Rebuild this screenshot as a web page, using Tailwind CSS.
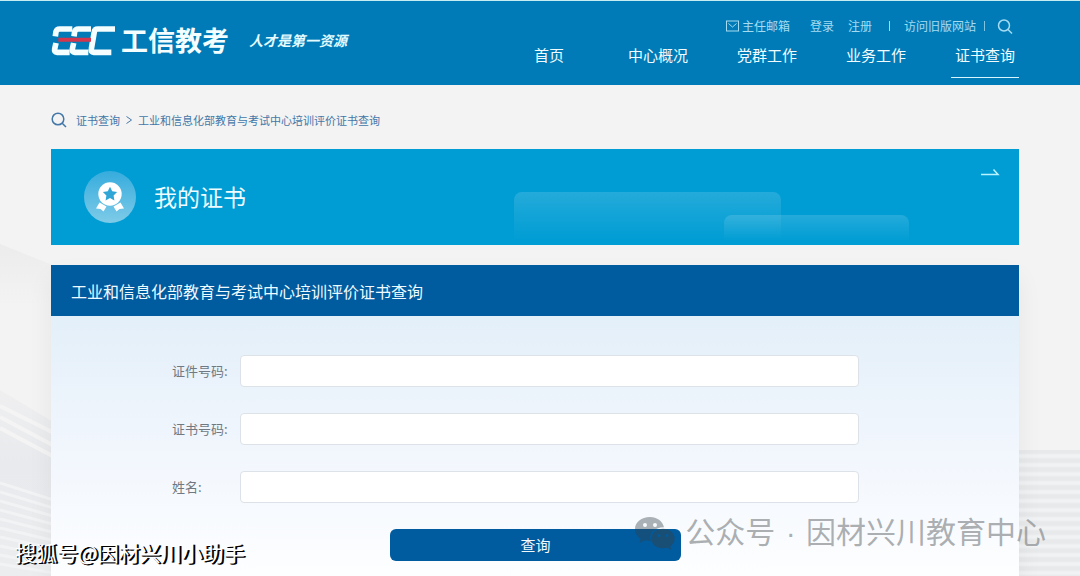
<!DOCTYPE html>
<html lang="zh-CN">
<head>
<meta charset="utf-8">
<meta name="viewport" content="width=device-width, initial-scale=1">
<title>证书查询</title>
<script src="https://cdn.jsdelivr.net/npm/@tailwindcss/browser@4"></script>
</head>
<body class="relative flex min-h-screen flex-col overflow-x-hidden bg-[#f3f3f3] font-['Noto_Sans_CJK_SC',sans-serif]">

<!-- Page backdrop -->
<svg class="absolute left-0 top-[240px] h-[336px] w-[60px]" viewBox="0 0 60 336" fill="none" aria-hidden="true">
  <defs>
    <linearGradient id="haze" x1="0" y1="0" x2="0" y2="1"><stop offset="0" stop-color="#ececed"/><stop offset=".35" stop-color="#f3f3f3"/></linearGradient>
    <linearGradient id="slope" x1="0" y1="0" x2="0" y2="1"><stop offset="0" stop-color="#efeff0"/><stop offset=".4" stop-color="#e8eaed"/><stop offset="1" stop-color="#ebedef"/></linearGradient>
  </defs>
  <path d="M0 4 60 28V180H0Z" fill="url(#haze)"/>
  <path d="M0 150 60 186V336H0Z" fill="url(#slope)"/>
  <path d="M0 166 60 196M0 177 60 209M0 188 60 220" stroke="#f4f4f5" stroke-width="4"/>
  <path d="M0 243 60 262M0 252 60 270M0 261 60 278M0 270 60 286M0 279 60 294M0 288 60 302M0 297 60 310M0 306 60 318M0 315 60 326M0 324 60 334" stroke="#f2f3f4" stroke-width="3"/>
</svg>
<div class="absolute right-0 top-[450px] h-[126px] w-[70px] bg-[repeating-linear-gradient(to_bottom,#e8e9ea_0px,#e8e9ea_3px,#f1f2f3_5px,#f1f2f3_7px,#e8e9ea_9px)]"></div>

<header class="relative flex h-[85px] justify-between border-t border-[#c4eef2] bg-[#007bb7] pl-[51px] pr-[61px] text-white">
  <a href="#" class="mt-[19px] flex h-10 items-center">
    <svg class="h-[34px] w-[66px]" viewBox="14 8 198 102" fill="none" stroke="#f4feff" stroke-width="17" aria-label="EEC" role="img">
      <path d="M78 26H40q-9 0-11 8l-2 14M29 68l-4 18q-2 10 7 10H70"/>
      <path d="M134 26H96q-9 0-11 8l-2 14M82 68l-4 18q-2 10 7 10H126"/>
      <path d="M206 26H154q-9 0-10 8l-9 52q-2 10 7 10H195"/>
      <path d="M36 58H134" stroke="#d3364d" stroke-width="12"/>
    </svg>
    <span class="ml-1 text-[27px] font-bold leading-10 text-[#f4feff]">工信教考</span>
    <span class="ml-5 text-sm font-bold italic leading-10 text-[#e4fbff]">人才是第一资源</span>
  </a>
  <div class="flex flex-col items-end pt-[15px]">
    <div class="mr-1.5 flex h-5 items-center text-xs text-[#a5dcf2]">
      <a href="#" class="flex items-center gap-[3px]">
        <svg class="h-3 w-[13px]" viewBox="0 0 13 12" fill="none" stroke="currentColor"><rect x=".5" y="1" width="12" height="10"/><path d="m2.500 3.500 4 3.500 4-3.500"/></svg>主任邮箱</a>
      <a href="#" class="ml-5">登录</a>
      <a href="#" class="ml-[14px]">注册</a>
      <span class="ml-[17px] h-[10px] w-px bg-[#a5dcf2]"></span>
      <a href="#" class="ml-[14px]">访问旧版网站</a>
      <span class="ml-2 mr-3 h-[10px] w-px bg-[#7fc4e2]"></span>
      <button type="button" aria-label="搜索"><svg class="h-4 w-4" viewBox="0 0 16 16" fill="none" stroke="currentColor" stroke-width="1.500"><circle cx="7" cy="7.500" r="5.500"/><path d="m11 11.500 4 4"/></svg></button>
    </div>
    <nav class="mt-1 flex gap-[41px] text-[15px] leading-[30px] text-[#f0fcff]">
      <a href="#" class="w-17 pb-[7px] text-center">首页</a>
      <a href="#" class="w-17 pb-[7px] text-center">中心概况</a>
      <a href="#" class="w-17 pb-[7px] text-center">党群工作</a>
      <a href="#" class="w-17 pb-[7px] text-center">业务工作</a>
      <a href="#" class="w-17 border-b border-[#d8f6ff] pb-[7px] text-center" aria-current="page">证书查询</a>
    </nav>
  </div>
</header>

<main class="relative flex grow flex-col pl-[51px] pr-[61px]">
  <div class="flex h-16 items-center pt-1.5 text-[11px] text-[#4377a8]">
    <svg class="mr-[9px] h-4 w-4" viewBox="0 0 16 16" fill="none" stroke="currentColor" stroke-width="1.500" aria-hidden="true"><circle cx="7" cy="7" r="5.800"/><path d="m11.200 11.200 3.800 3.800"/></svg>
    <a href="#">证书查询</a>
    <svg class="mx-1.5 h-2 w-[6px]" viewBox="0 0 6 8" fill="none" stroke="currentColor" aria-hidden="true"><path d="m.5.5 5 3.500-5 3.500"/></svg>
    <a href="#">工业和信息化部教育与考试中心培训评价证书查询</a>
  </div>

  <section class="relative flex h-24 shrink-0 items-center overflow-hidden bg-[#009dd4] pl-[33px]">
    <div class="absolute right-[238px] top-[43px] h-12 w-[267px] rounded-t-lg bg-linear-to-b from-white/14 to-white/0"></div>
    <div class="absolute right-[110px] top-[66px] h-[26px] w-[185px] rounded-t-lg bg-linear-to-b from-white/14 to-white/0"></div>
    <svg class="h-[52px] w-[52px]" viewBox="0 0 52 52" aria-hidden="true">
      <defs><linearGradient id="disc" x1="0" y1="0" x2="0" y2="1"><stop offset="0" stop-color="#36acdd"/><stop offset="1" stop-color="#7ecbe8"/></linearGradient></defs>
      <circle cx="26" cy="26" r="26" fill="url(#disc)"/>
      <path d="M15.500 31.500 22.500 35.500 19.500 40.500 16.500 38 12 37.500ZM36.500 31.500 29.500 35.500 32.500 40.500 35.500 38 40 37.500Z" fill="#fff"/>
      <circle cx="26" cy="23" r="11.700" fill="#fff"/>
      <path d="m26 15.800 2.200 4.500 4.900.7-3.500 3.500.8 4.900-4.400-2.300-4.400 2.300.8-4.900-3.500-3.500 4.900-.7Z" fill="#2fa6d6"/>
    </svg>
    <h2 class="ml-[18px] pb-0.5 text-[23px] leading-8 text-[#effcff]">我的证书</h2>
    <svg class="absolute right-[19px] top-[19px] h-2 w-5" viewBox="0 0 20 8" fill="none" stroke="#b9f3ff" stroke-width="1.500" aria-hidden="true"><path d="M1 6.500H18L13.500 1.500"/></svg>
  </section>

  <section class="mt-5 flex grow flex-col shadow-[0_12px_24px_rgba(0,0,0,0.06)]">
    <h1 class="h-[51px] bg-[#005b9f] pl-5 text-base leading-[52px] text-[#effaff]">工业和信息化部教育与考试中心培训评价证书查询</h1>
    <form class="flex grow flex-col gap-[26px] bg-linear-to-b from-[#e3eff9] via-[#f1f6fd] to-[#fdfeff] pb-[15px] pl-[121px] pr-[160px] pt-[39px] text-[13px] text-[#707982]">
      <div class="flex h-8 items-center"><label for="idno" class="w-17">证件号码:</label><input id="idno" type="text" class="h-8 min-w-0 flex-1 rounded-sm border border-[#dce2e7] bg-white px-3"></div>
      <div class="flex h-8 items-center"><label for="certno" class="w-17">证书号码:</label><input id="certno" type="text" class="h-8 min-w-0 flex-1 rounded-sm border border-[#dce2e7] bg-white px-3"></div>
      <div class="flex h-8 items-center"><label for="name" class="w-17">姓名:</label><input id="name" type="text" class="h-8 min-w-0 flex-1 rounded-sm border border-[#dce2e7] bg-white px-3"></div>
      <button type="submit" class="ml-[218px] mr-[178px] h-8 rounded-md bg-[#005b9f] text-[15px] text-[#effaff]">查询</button>
    </form>
  </section>
</main>

<!-- Watermarks -->
<div class="absolute right-[34px] top-[510px] flex items-center gap-2.5 text-[30px] leading-10 text-[#777b7e]/60">
  <svg class="h-9 w-10" viewBox="0 0 40 36" aria-hidden="true">
    <path fill="#31414b" fill-opacity=".4" fill-rule="evenodd" d="M15 3C6.500 3 0 8.300 0 15c0 4 2 7.300 5.500 9.500L4.500 29l5.200-2.800c1.800.5 3.700.8 6 .7C13.500 19.500 19 13.500 29 13.300 27.500 7.200 22 3 15 3ZM10 9a2 2 0 1 1 0 4 2 2 0 0 1 0-4Zm10 0a2 2 0 1 1 0 4 2 2 0 0 1 0-4Z"/>
    <path fill="#31414b" fill-opacity=".5" fill-rule="evenodd" d="M28 14.700c-6.500 0-11.700 4.300-11.700 9.800S21.500 34.300 28 34.300c1.500 0 3-.3 4.300-.7l4 2.200-1-3.600c2.700-1.800 4.400-4.500 4.400-7.700 0-5.500-5.200-9.800-11.700-9.800ZM24 20a1.500 1.500 0 1 1 0 3 1.500 1.500 0 0 1 0-3Zm8 0a1.500 1.500 0 1 1 0 3 1.500 1.500 0 0 1 0-3Z"/>
  </svg>
  <span>公众号<span class="px-0.5 font-['Liberation_Sans',sans-serif]"> · </span>因材兴川教育中心</span>
</div>
<div class="absolute left-[15px] top-[536px] text-[21px] leading-8 text-white [text-shadow:1px_1px_0_#000,2px_1px_0_#000]">搜狐号@因材兴川小助手</div>
</body>
</html>
